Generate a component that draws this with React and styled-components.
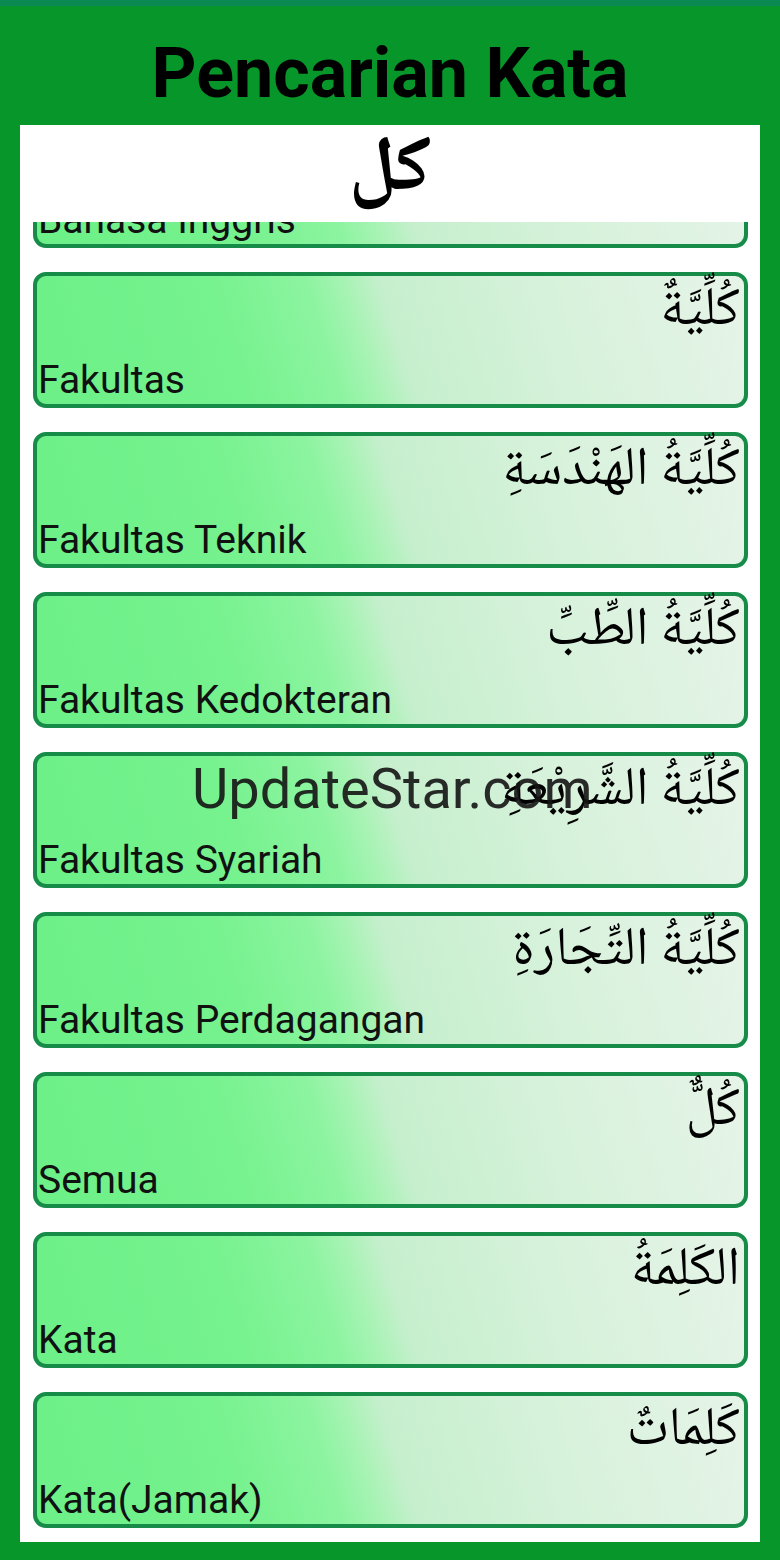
import React, { useLayoutEffect, useRef } from 'react'
import styled, { createGlobalStyle } from 'styled-components'

const Global = createGlobalStyle`
  html, body { margin: 0; padding: 0; }
  body { font-family: Roboto, "Liberation Sans", sans-serif; background: #07962a; }
`

const Pagina = styled.div`
  position: relative;
  width: 780px;
  height: 1560px;
  background: #07962a;
  display: flex;
  flex-direction: column;
  border-top: 6px solid #0a8a52;
  box-sizing: border-box;
`

const Cabecalho = styled.div`
  height: 119px;
  box-sizing: border-box;
  padding-top: 14px;
  display: flex;
  align-items: center;
  justify-content: center;
`

const Titulo = styled.h1`
  margin: 0;
  font-family: Roboto, "Liberation Sans", sans-serif;
  font-weight: 700;
  font-size: 70px;
  line-height: 1;
  color: #000;
`

const Painel = styled.div`
  flex: 1;
  margin: 0 20px 18px 20px;
  background: #fff;
  display: flex;
  flex-direction: column;
  min-height: 0;
`

const CaixaBusca = styled.div`
  height: 97px;
  flex: 0 0 auto;
  display: flex;
  align-items: center;
  justify-content: center;
  font-family: "Noto Naskh Arabic", "DejaVu Sans", serif;
  font-size: 78px;
  font-weight: 700;
  line-height: 97px;
  color: #000;
  direction: rtl;
`

const Lista = styled.div`
  flex: 1;
  overflow-y: auto;
  scrollbar-width: none;
  &::-webkit-scrollbar { display: none; }
  padding: 12px 12px 14px 13px;
  display: flex;
  flex-direction: column;
  gap: 24px;
`

const Cartao = styled.div`
  flex: 0 0 auto;
  height: 136px;
  box-sizing: border-box;
  border: 4px solid #178c48;
  border-radius: 13px;
  background: linear-gradient(73deg, #6cf087 0%, #76f28e 28%, #8cf4a0 41%, #a6f3b3 46%, #c6efcd 51%, #d8f2dc 75%, #e6f4e8 100%);
  display: flex;
  flex-direction: column;
  justify-content: space-between;
  padding: 0 4px 1px 1px;
`

const Arabe = styled.div`
  direction: rtl;
  text-align: right;
  font-family: "Noto Naskh Arabic", "DejaVu Sans", serif;
  font-size: 54px;
  line-height: 72px;
  color: #000;
  white-space: nowrap;
`

const Latim = styled.div`
  font-family: Roboto, "Liberation Sans", sans-serif;
  font-size: 39px;
  line-height: 46px;
  color: #111;
  white-space: nowrap;
`

const MarcaDagua = styled.div`
  position: absolute;
  left: 192px;
  top: 750px;
  font-family: Roboto, "Liberation Sans", sans-serif;
  font-size: 56px;
  color: rgba(20, 20, 20, 0.9);
  pointer-events: none;
`

const palavras = [
  { ar: 'اللُّغَةُ الإِنْجِلِيزِيَّةُ', id: 'Bahasa Inggris' },
  { ar: 'كُلِّيَّةٌ', id: 'Fakultas' },
  { ar: 'كُلِّيَّةُ الهَنْدَسَةِ', id: 'Fakultas Teknik' },
  { ar: 'كُلِّيَّةُ الطِّبِّ', id: 'Fakultas Kedokteran' },
  { ar: 'كُلِّيَّةُ الشَّرِيْعَةِ', id: 'Fakultas Syariah' },
  { ar: 'كُلِّيَّةُ التِّجَارَةِ', id: 'Fakultas Perdagangan' },
  { ar: 'كُلٌّ', id: 'Semua' },
  { ar: 'الكَلِمَةُ', id: 'Kata' },
  { ar: 'كَلِمَاتٌ', id: 'Kata(Jamak)' },
]

export default function App() {
  const listaRef = useRef(null)

  useLayoutEffect(() => {
    if (listaRef.current) listaRef.current.scrollTop = 122
  }, [])

  return (
    <>
      <Global />
      <Pagina>
        <Cabecalho>
          <Titulo>Pencarian Kata</Titulo>
        </Cabecalho>
        <Painel>
          <CaixaBusca>كل</CaixaBusca>
          <Lista ref={listaRef}>
            {palavras.map((p) => (
              <Cartao key={p.id}>
                <Arabe>{p.ar}</Arabe>
                <Latim>{p.id}</Latim>
              </Cartao>
            ))}
          </Lista>
        </Painel>
        <MarcaDagua>UpdateStar.com</MarcaDagua>
      </Pagina>
    </>
  )
}
